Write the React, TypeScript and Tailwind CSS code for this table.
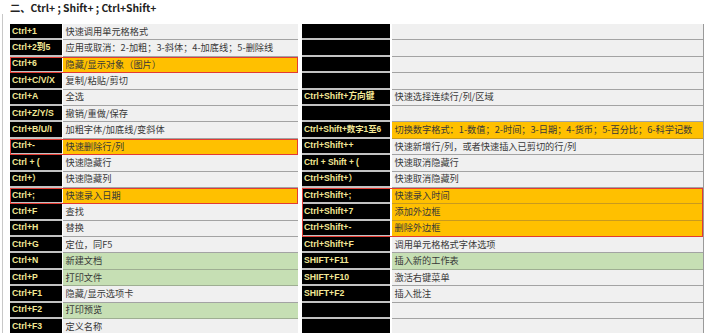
import React from "react";

type Row = { k: string; d: string; bg?: "o" | "g" | "w"; box?: boolean };

const left: Row[] = [
  { k: "Ctrl+1", d: "快速调用单元格格式" },
  { k: "Ctrl+2到5", d: "应用或取消：2-加粗；3-斜体；4-加底线；5-删除线" },
  { k: "Ctrl+6", d: "隐藏/显示对象（图片）", bg: "o", box: true },
  { k: "Ctrl+C/V/X", d: "复制/粘贴/剪切" },
  { k: "Ctrl+A", d: "全选" },
  { k: "Ctrl+Z/Y/S", d: "撤销/重做/保存" },
  { k: "Ctrl+B/U/I", d: "加粗字体/加底线/变斜体" },
  { k: "Ctrl+-", d: "快速删除行/列", bg: "o", box: true },
  { k: "Ctrl + (", d: "快速隐藏行" },
  { k: "Ctrl+）", d: "快速隐藏列" },
  { k: "Ctrl+;", d: "快速录入日期", bg: "o", box: true },
  { k: "Ctrl+F", d: "查找" },
  { k: "Ctrl+H", d: "替换" },
  { k: "Ctrl+G", d: "定位，同F5" },
  { k: "Ctrl+N", d: "新建文档", bg: "g" },
  { k: "Ctrl+P", d: "打印文件", bg: "g" },
  { k: "Ctrl+F1", d: "隐藏/显示选项卡" },
  { k: "Ctrl+F2", d: "打印预览", bg: "g" },
  { k: "Ctrl+F3", d: "定义名称" },
];

const rightTop: Row[] = [
  { k: "", d: "" },
  { k: "", d: "" },
  { k: "", d: "" },
  { k: "", d: "" },
  { k: "Ctrl+Shift+方向键", d: "快速选择连续行/列/区域" },
  { k: "", d: "" },
  { k: "Ctrl+Shift+数字1至6", d: "切换数字格式：1-数值；2-时间；3-日期；4-货币；5-百分比；6-科学记数", bg: "o" },
  { k: "Ctrl+Shift++", d: "快速新增行/列，或者快速插入已剪切的行/列" },
  { k: "Ctrl + Shift + (", d: "快速取消隐藏行" },
  { k: "Ctrl+Shift+）", d: "快速取消隐藏列" },
];
const rightBox: Row[] = [
  { k: "Ctrl+Shift+;", d: "快速录入时间", bg: "o" },
  { k: "Ctrl+Shift+7", d: "添加外边框", bg: "o" },
  { k: "Ctrl+Shift+-", d: "删除外边框", bg: "o" },
];
const rightBottom: Row[] = [
  { k: "Ctrl+Shift+F", d: "调用单元格格式字体选项" },
  { k: "SHIFT+F11", d: "插入新的工作表", bg: "g" },
  { k: "SHIFT+F10", d: "激活右键菜单" },
  { k: "SHIFT+F2", d: "插入批注" },
  { k: "", d: "" },
  { k: "", d: "" },
];

const KEYFONT = { fontFamily: '"Liberation Sans", "Noto Sans CJK SC", sans-serif' };
const DESCFONT = { fontFamily: '"Noto Sans CJK SC", "Liberation Sans", sans-serif' };

function bgClass(bg?: string) {
  if (bg === "o") return "bg-[#ffc000] border-b-[#c99a1e]";
  if (bg === "g") return "bg-[#c6dfb4] border-b-[#9eae92]";
  return "bg-[#f0f0f0] border-b-[#a3a3a3]";
}

function RowView({ r, keyW, gapCls, small }: { r: Row; keyW: string; gapCls: string; small?: boolean }) {
  return (
    <div
      className={
        "flex h-[16.4px] " +
        gapCls +
        (r.box ? " relative z-10 outline-[1.5px] outline-solid outline-[#e23b33] -outline-offset-1" : "")
      }
    >
      <div
        className={
          keyW +
          " shrink-0 bg-black border-b-2 border-b-[#c2c2c2] flex items-center pl-[2px] font-bold text-[#f3e896] whitespace-nowrap overflow-hidden " +
          (small ? "text-[8.4px]" : "text-[8.7px]")
        }
        style={KEYFONT}
      >
        {r.k}
      </div>
      <div
        className={
          "flex-1 border-b-[1.5px] flex items-center pl-[2.5px] text-[9.2px] text-[#383838] whitespace-nowrap overflow-hidden " +
          bgClass(r.bg)
        }
        style={DESCFONT}
      >
        {r.d}
      </div>
    </div>
  );
}

export default function App() {
  return (
    <div className="w-[709px] h-[333px] overflow-hidden bg-white relative">
      <div className="absolute left-[2px] top-[14px] bottom-0 w-px bg-[#c8c8c8]" />
      <div
        className="h-[24px] pl-[10px] pt-[1px] text-[10.3px] font-bold text-[#222] leading-[13px] whitespace-nowrap"
        style={DESCFONT}
      >
        二、Ctrl+ ; Shift+ ; Ctrl+Shift+
      </div>
      <div className="flex ml-[10px] gap-[4px]">
        <div className="w-[288px] flex flex-col">
          {left.map((r, i) => (
            <RowView key={i} r={r} keyW="w-[52px]" gapCls="gap-px" />
          ))}
        </div>
        <div className="w-[402px] flex flex-col border-r border-r-[#9a9a9a]">
          {rightTop.map((r, i) => (
            <RowView key={i} r={r} keyW="w-[88px]" gapCls="gap-[2px]" small={r.k.length > 14} />
          ))}
          <div className="relative z-10 flex flex-col outline-[1.5px] outline-solid outline-[#e23b33] -outline-offset-1">
            {rightBox.map((r, i) => (
              <RowView key={i} r={r} keyW="w-[88px]" gapCls="gap-[2px]" />
            ))}
          </div>
          {rightBottom.map((r, i) => (
            <RowView key={i} r={r} keyW="w-[88px]" gapCls="gap-[2px]" />
          ))}
        </div>
      </div>
    </div>
  );
}
